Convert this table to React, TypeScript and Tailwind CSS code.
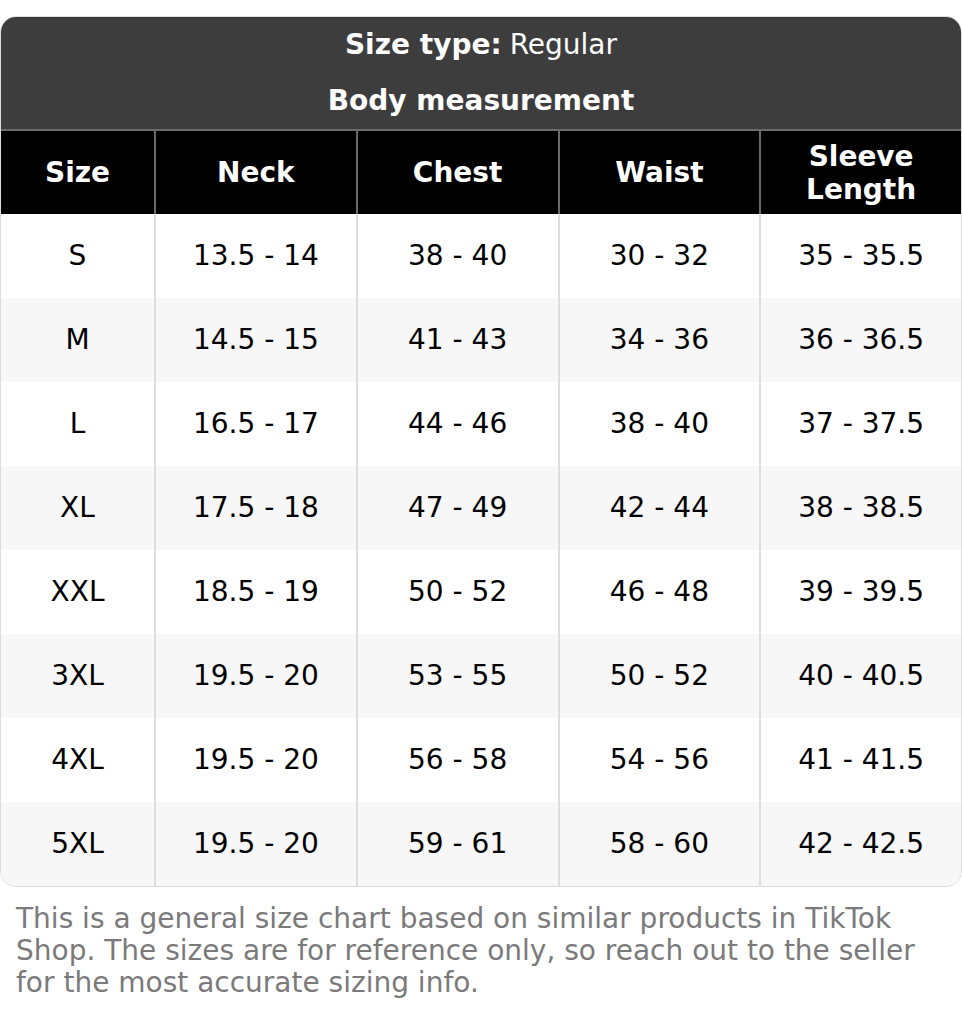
const rows = [
  ['S', '13.5 - 14', '38 - 40', '30 - 32', '35 - 35.5'],
  ['M', '14.5 - 15', '41 - 43', '34 - 36', '36 - 36.5'],
  ['L', '16.5 - 17', '44 - 46', '38 - 40', '37 - 37.5'],
  ['XL', '17.5 - 18', '47 - 49', '42 - 44', '38 - 38.5'],
  ['XXL', '18.5 - 19', '50 - 52', '46 - 48', '39 - 39.5'],
  ['3XL', '19.5 - 20', '53 - 55', '50 - 52', '40 - 40.5'],
  ['4XL', '19.5 - 20', '56 - 58', '54 - 56', '41 - 41.5'],
  ['5XL', '19.5 - 20', '59 - 61', '58 - 60', '42 - 42.5'],
];

const heads = ['Size', 'Neck', 'Chest', 'Waist', 'Sleeve Length'];

const cols = 'grid grid-cols-[153px_1fr_1fr_1fr_1fr]';

export default function App() {
  return (
    <div className="min-h-screen bg-white pt-4 font-['DejaVu_Sans',sans-serif]">
      <div className="overflow-hidden rounded-2xl border border-[#dcdcdc]">
        <div className="bg-[#3d3d3d] text-center text-[28px] text-white">
          <div className="flex h-14 items-center justify-center">
            <span className="font-bold">Size type:</span>
            <span className="ml-2">Regular</span>
          </div>
          <div className="flex h-14 items-center justify-center font-bold">Body measurement</div>
        </div>
        <div className={`${cols} h-[85px] border-t-2 border-[#6b6b6b] bg-black text-white`}>
          {heads.map((h, i) => (
            <div
              key={h}
              className={`flex items-center justify-center px-8 text-center text-[28px] font-bold leading-[33px] ${i > 0 ? 'border-l-2 border-[#6b6b6b]' : ''}`}
            >
              {h}
            </div>
          ))}
        </div>
        {rows.map((r, ri) => (
          <div key={r[0]} className={`${cols} h-[84px] ${ri % 2 ? 'bg-[#f7f7f7]' : 'bg-white'}`}>
            {r.map((c, i) => (
              <div
                key={i}
                className={`flex items-center justify-center text-[28px] text-black ${i > 0 ? 'border-l-2 border-[#dedede]' : ''}`}
              >
                {c}
              </div>
            ))}
          </div>
        ))}
      </div>
      <p className="px-4 pt-4 text-[28px] leading-8 text-[#7a7a7a]">
        This is a general size chart based on similar products in TikTok Shop. The sizes are for reference only, so reach out to the seller for the most accurate sizing info.
      </p>
    </div>
  );
}
